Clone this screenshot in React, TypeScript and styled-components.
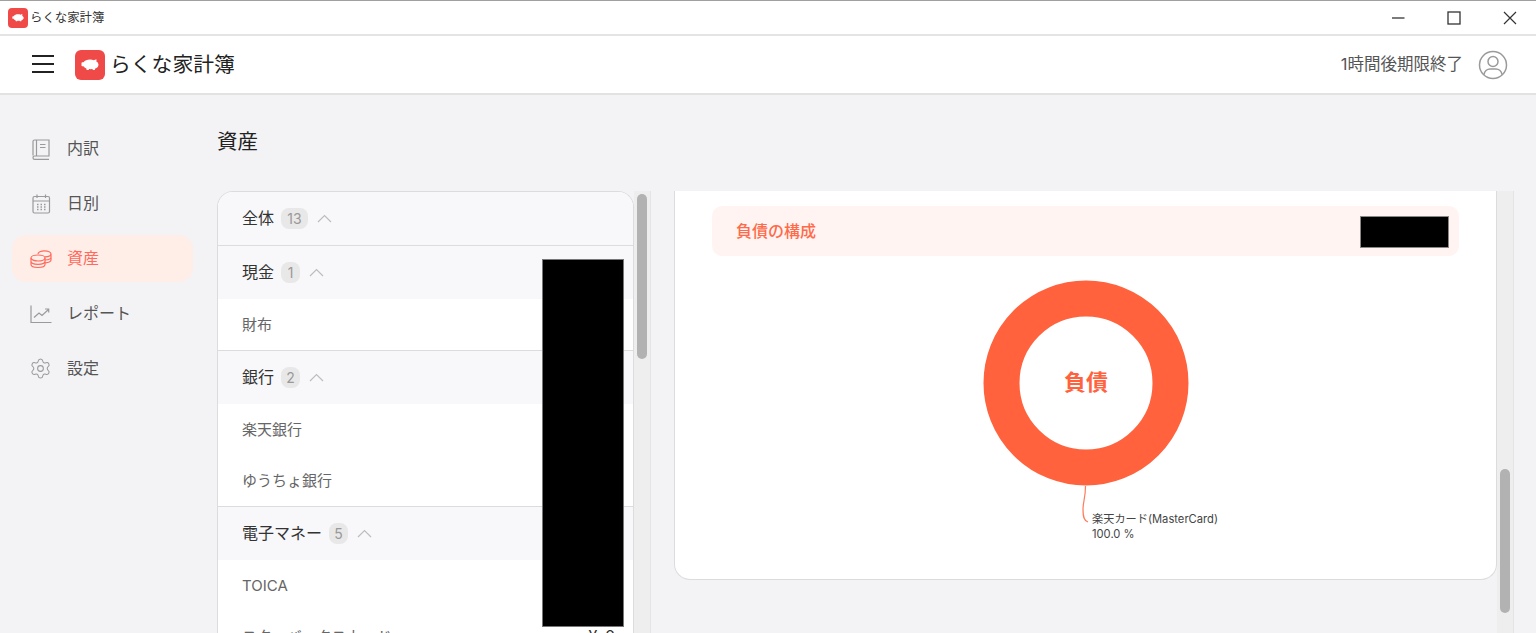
import React from "react"
import styled, { createGlobalStyle } from "styled-components"
import { Settings } from "lucide-react"

const GlobalStyle = createGlobalStyle`
  html, body {
    margin: 0;
    height: 100%;
    overflow: hidden;
    background: #f3f3f6;
    font-family: "Inter", "Noto Sans CJK JP", "Noto Sans", sans-serif;
    line-height: 1.4;
  }
  * {
    box-sizing: border-box;
  }
`

const groups = [
  { name: "現金", count: 1, items: ["財布"] },
  { name: "銀行", count: 2, items: ["楽天銀行", "ゆうちょ銀行"] },
  { name: "電子マネー", count: 5, items: ["TOICA", "スターバックスカード"] },
]

const PigLogo = ({ size }: { size: number }) => (
  <svg width={size} height={size} viewBox="0 0 30 30">
    <rect width="30" height="30" rx="6" fill="#f04a48" />
    <path
      d="M6.5 13.2c0-.6.5-1 1-1h1c1.400-1.900 3.600-2.700 6.500-2.700 1.400 0 2.700.2 3.900.7.800-.6 1.800-.8 2.700-.7l-.3 2c1.300.7 2.100 1.800 2.200 3.200 0 1.900-1.500 3.200-3.300 3.800l-.4 1.500h-2l-.3-1c-1 .2-2.400.2-3.500 0l-.3 1h-2l-.4-1.500c-1.300-.5-2.200-1.200-2.900-2.300h-1c-.5 0-.9-.4-.9-1z"
      fill="#fff"
    />
  </svg>
)

const Chevron = () => (
  <ChevronIcon width="15" height="9" viewBox="0 0 15 9">
    <polyline points="1,8 7.500,1.500 14,8" fill="none" stroke="#bdbdbd" strokeWidth="1.200" />
  </ChevronIcon>
)

const BookIcon = ({ color }: { color: string }) => (
  <svg width="22" height="22" viewBox="0 0 22 22" fill="none" stroke={color} strokeWidth="1.200">
    <path d="M3 17.500V3.500A1.500 1.500 0 0 1 4.500 2H19v16H4.700A1.700 1.700 0 0 0 3 19.700 1.700 1.700 0 0 0 4.700 21.400H19" />
    <path d="M6.500 2v16M10 6.500h5.500M10 9.500h5.500" />
  </svg>
)

const CalendarIcon = ({ color }: { color: string }) => (
  <svg width="22" height="22" viewBox="0 0 22 22" fill="none" stroke={color} strokeWidth="1.200">
    <rect x="3" y="3.500" width="16.500" height="16.500" rx="1.500" />
    <path d="M3 8h16.500M7 1.500v3.500M15.500 1.500v3.500" />
    <path d="M7 11.500h1.500M10.500 11.500H12M14 11.500h1.500M7 14h1.500M10.500 14H12M14 14h1.500M7 16.500h1.500M10.500 16.500H12M14 16.500h1.500" strokeWidth="1.500" />
  </svg>
)

const CoinsIcon = ({ color }: { color: string }) => (
  <svg width="22" height="22" viewBox="0 0 22 22" fill="none" stroke={color} strokeWidth="1.200">
    <ellipse cx="8" cy="10" rx="7" ry="3" />
    <path d="M1 10v6.500c0 1.700 3.100 3 7 3s7-1.300 7-3V10M1 13.300c0 1.700 3.100 3 7 3s7-1.300 7-3" />
    <path d="M8 6c0-1.700 2.900-3.200 6.500-3.200S21 4.200 21 6v6c0 1.300-2.300 2.500-6 2.800M15 8.900c3.400-.2 6-1.400 6-2.900M15 12c3.400-.2 6-1.300 6-2.800" />
  </svg>
)

const ChartIcon = ({ color }: { color: string }) => (
  <svg width="22" height="22" viewBox="0 0 22 22" fill="none" stroke={color} strokeWidth="1.200">
    <path d="M1 2.500v17h20.500" />
    <path d="M4 14.500l5-4.500 3 2.500 6.500-6M15 6h3.700v3.500" />
  </svg>
)

const navItems = [
  { label: "内訳", Icon: BookIcon },
  { label: "日別", Icon: CalendarIcon },
  { label: "資産", Icon: CoinsIcon, active: true },
  { label: "レポート", Icon: ChartIcon },
]

const App = () => {
  return (
    <>
      <GlobalStyle />
      <Window>
        <TitleBar>
          <TitleGroup>
            <PigLogo size={20} />
            <TitleText>らくな家計簿</TitleText>
          </TitleGroup>
          <WindowControls>
            <svg width="14" height="14" viewBox="0 0 14 14" stroke="#333" strokeWidth="1.300" fill="none">
              <path d="M1 7h12.500" />
            </svg>
            <svg width="14" height="14" viewBox="0 0 14 14" stroke="#333" strokeWidth="1.300" fill="none">
              <rect x="1" y="1" width="12" height="12" />
            </svg>
            <svg width="14" height="14" viewBox="0 0 14 14" stroke="#333" strokeWidth="1.200" fill="none">
              <path d="M1 1l12 12M13 1L1 13" />
            </svg>
          </WindowControls>
        </TitleBar>
        <Header>
          <Brand>
            <MenuIcon width="22" height="18" viewBox="0 0 22 18" stroke="#222" strokeWidth="2" fill="none">
              <path d="M0 1h22M0 9h22M0 17h22" />
            </MenuIcon>
            <PigLogo size={30} />
            <BrandName>らくな家計簿</BrandName>
          </Brand>
          <Account>
            <Expiry>1時間後期限終了</Expiry>
            <svg width="30" height="30" viewBox="0 0 30 30" fill="none" stroke="#9a9a9a" strokeWidth="1.500">
              <circle cx="15" cy="15" r="13.500" />
              <circle cx="15" cy="11.500" r="5" />
              <path d="M6 24.500c.6-3.500 3.500-5.500 6-5.500h6c2.500 0 5.400 2 6 5.500" />
            </svg>
          </Account>
        </Header>
        <Body>
          <Sidebar>
            {navItems.map(({ label, Icon, active }) => (
              <NavItem key={label} $active={active}>
                <NavIcon>
                  <Icon color={active ? "#ff6a5c" : "#9a9a9a"} />
                </NavIcon>
                {label}
              </NavItem>
            ))}
            <NavItem>
              <NavIcon>
                <Settings size={25} color="#9a9a9a" strokeWidth={1.100} />
              </NavIcon>
              設定
            </NavItem>
          </Sidebar>
          <Main>
            <PageTitle>資産</PageTitle>
            <Columns>
              <ListPane>
                <GroupHeader $first>
                  全体
                  <Badge $wide>13</Badge>
                  <Chevron />
                </GroupHeader>
                {groups.map((group) => (
                  <div key={group.name}>
                    <GroupHeader>
                      {group.name}
                      <Badge>{group.count}</Badge>
                      <Chevron />
                    </GroupHeader>
                    {group.items.map((item) => (
                      <ItemRow key={item}>
                        {item}
                        {item === "スターバックスカード" && <Amount>¥ 0</Amount>}
                      </ItemRow>
                    ))}
                  </div>
                ))}
                <ListRedaction />
              </ListPane>
              <ScrollTrack>
                <ScrollThumb $top={3} $height={165} />
              </ScrollTrack>
              <ChartPane>
                <ChartBand>
                  <BandTitle>負債の構成</BandTitle>
                  <BandRedaction />
                </ChartBand>
                <ChartBox>
                  <svg width="400" height="290" viewBox="0 0 400 290">
                    <circle cx="200" cy="115" r="84.500" fill="none" stroke="#ff623d" strokeWidth="36" />
                    <text x="200" y="122" textAnchor="middle" fontSize="22" fontWeight="700" fill="#ff623d">
                      負債
                    </text>
                    <path d="M199.500 218c0 12-2.500 16-2.500 23 0 8 1 12 5 13" fill="none" stroke="#ff7a5c" strokeWidth="1.200" />
                    <text x="206" y="255" fontSize="11.200" fill="#444">
                      楽天カード(MasterCard)
                    </text>
                    <text x="206" y="270" fontSize="11.200" fill="#444">
                      100.0 %
                    </text>
                  </svg>
                </ChartBox>
              </ChartPane>
              <ScrollTrack>
                <ScrollThumb $top={278} $height={144} />
              </ScrollTrack>
            </Columns>
          </Main>
        </Body>
      </Window>
    </>
  )
}

const Window = styled.div`
  display: flex;
  flex-direction: column;
  width: 1536px;
  height: 633px;
  overflow: hidden;
`

const TitleBar = styled.div`
  display: flex;
  justify-content: space-between;
  align-items: center;
  flex: none;
  height: 36px;
  padding: 0 19px 0 8px;
  background: #fff;
  border-top: 1px solid #a0a0a0;
  border-bottom: 2px solid #e4e4e4;
`

const TitleGroup = styled.div`
  display: flex;
  align-items: center;
  gap: 2px;
`

const TitleText = styled.span`
  font-size: 12.400px;
  color: #333;
`

const WindowControls = styled.div`
  display: flex;
  align-items: center;
  gap: 42px;
`

const Header = styled.header`
  display: flex;
  justify-content: space-between;
  align-items: center;
  flex: none;
  height: 59px;
  padding: 0 28px 0 32px;
  background: #fff;
  border-bottom: 2px solid #e2e2e2;
`

const Brand = styled.div`
  display: flex;
  align-items: center;
  gap: 21px;
`

const MenuIcon = styled.svg`
  margin-bottom: 2px;
`

const BrandName = styled.span`
  margin-left: -16px;
  font-size: 20.800px;
  color: #222;
`

const Account = styled.div`
  display: flex;
  align-items: center;
  gap: 15px;
`

const Expiry = styled.span`
  padding-top: 1px;
  font-size: 16.500px;
  color: #555;
`

const Body = styled.div`
  display: flex;
  flex: 1;
  min-height: 0;
`

const Sidebar = styled.nav`
  display: flex;
  flex-direction: column;
  flex: none;
  gap: 8px;
  width: 205px;
  padding: 30px 12px 0;
`

const NavItem = styled.div<{ $active?: boolean }>`
  display: flex;
  align-items: center;
  gap: 15px;
  height: 47px;
  padding-left: 17px;
  border-radius: 14px;
  font-size: 16px;
  color: ${(props) => (props.$active ? "#ff6a5c" : "#555")};
  background: ${(props) => (props.$active ? "#ffede8" : "transparent")};
`

const NavIcon = styled.span`
  display: flex;
  width: 23px;
  justify-content: center;
`

const Main = styled.main`
  display: flex;
  flex-direction: column;
  flex: 1;
  min-width: 0;
  padding: 31px 0 0 12px;
`

const PageTitle = styled.h1`
  margin: 0 0 33px;
  font-size: 20.500px;
  line-height: 32px;
  font-weight: 400;
  color: #222;
`

const Columns = styled.div`
  display: flex;
  flex: 1;
  min-height: 0;
`

const ListPane = styled.section`
  position: relative;
  flex: none;
  width: 417px;
  height: 500px;
  background: #fff;
  border: 1px solid #dcdcdf;
  border-bottom: 0;
  border-radius: 16px 16px 0 0;
  overflow: hidden;
`

const GroupHeader = styled.div<{ $first?: boolean }>`
  display: flex;
  align-items: center;
  height: ${(props) => (props.$first ? "54px" : "53px")};
  padding-left: 24px;
  background: #f8f8fa;
  border-bottom: ${(props) => (props.$first ? "1px solid #dcdcdf" : "0")};
  font-size: 16px;
  color: #333;
`

const Badge = styled.span<{ $wide?: boolean }>`
  display: flex;
  justify-content: center;
  align-items: center;
  width: ${(props) => (props.$wide ? "27px" : "19px")};
  height: 21px;
  margin-left: 7px;
  border-radius: 8px;
  background: #e8e8e8;
  font-size: 14px;
  color: #999;
`

const ChevronIcon = styled.svg`
  margin-left: 9px;
`

const ItemRow = styled.div`
  display: flex;
  justify-content: space-between;
  align-items: center;
  height: 51px;
  padding: 0 18px 1px 24px;
  background: #fff;
  font-size: 15px;
  color: #666;

  &:last-child {
    height: 52px;
    border-bottom: 1px solid #dcdcdf;
  }
`

const Amount = styled.span`
  font-size: 16px;
  word-spacing: 3px;
  color: #333;
`

const ListRedaction = styled.div`
  position: absolute;
  top: 67px;
  left: 324px;
  width: 82px;
  height: 368px;
  background: #000;
  border: 1px solid #777;
`

const ScrollTrack = styled.div`
  flex: none;
  width: 17px;
  height: 442px;
  padding: 0 4px 0 3px;
  background: #eeeeee;
  border-right: 1px solid #e4e4e6;
`

const ScrollThumb = styled.div<{ $top: number; $height: number }>`
  width: 10px;
  height: ${(props) => props.$height}px;
  margin-top: ${(props) => props.$top}px;
  border-radius: 5px;
  background: #b2b2b2;
`

const ChartPane = styled.section`
  flex: none;
  width: 823px;
  height: 389px;
  margin-left: 23px;
  padding: 15px 37px 0;
  background: #fff;
  border: 1px solid #dcdcdf;
  border-top: 0;
  border-radius: 0 0 16px 16px;
`

const ChartBand = styled.div`
  display: flex;
  justify-content: space-between;
  align-items: center;
  height: 50px;
  padding: 0 10px 0 24px;
  border-radius: 10px;
  background: #fff4f1;
`

const BandTitle = styled.span`
  font-size: 16px;
  font-weight: 500;
  color: #ff6a4a;
`

const BandRedaction = styled.div`
  width: 89px;
  height: 32px;
  margin-top: 1px;
  background: #000;
  border: 1px solid #888;
`

const ChartBox = styled.div`
  display: flex;
  justify-content: center;
  margin-top: 12px;

  text {
    font-family: "Inter", "Noto Sans CJK JP", "Noto Sans", sans-serif;
  }
`

export default App
